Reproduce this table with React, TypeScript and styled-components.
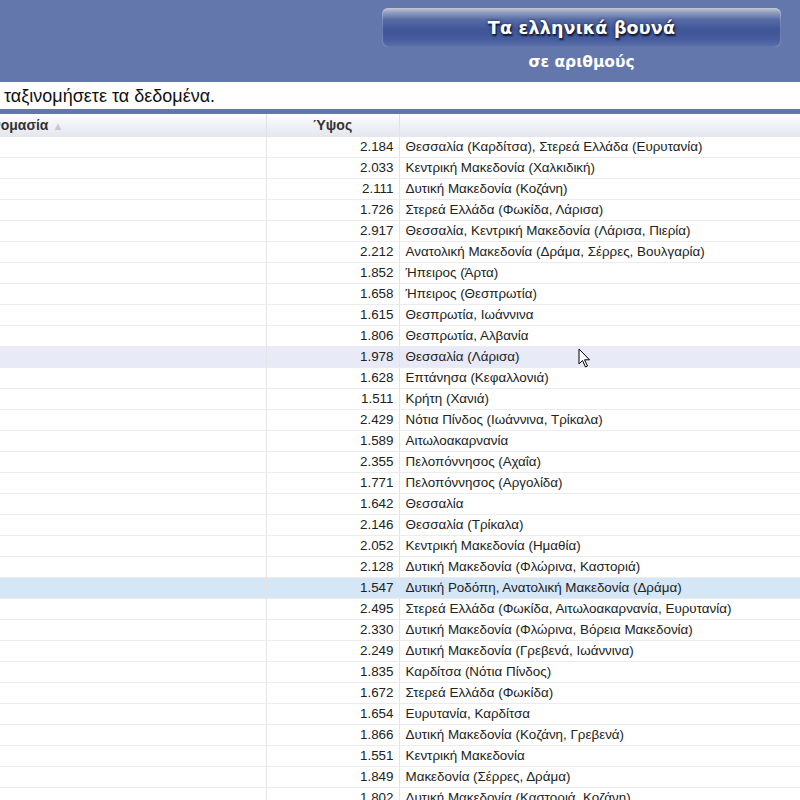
import React from "react";
import styled, { createGlobalStyle } from "styled-components";

const Global = createGlobalStyle`
  html, body { margin: 0; padding: 0; background: #fff; }
  body { font-family: "Liberation Sans", Arial, sans-serif; }
`;

const Page = styled.div`
  width: 800px;
  height: 800px;
  overflow: hidden;
  position: relative;
`;

const Header = styled.header`
  height: 82px;
  background: #6377ad;
  display: flex;
  justify-content: flex-end;
  padding-right: 19px;
  box-sizing: border-box;
`;

const Banner = styled.div`
  width: 399px;
  display: flex;
  flex-direction: column;
  align-items: stretch;
  padding-top: 8px;
`;

const TitleBox = styled.div`
  height: 39px;
  border-radius: 6px;
  background: linear-gradient(
    to bottom,
    #c3c9d3 0%,
    #8e9cbf 12%,
    #566ba6 30%,
    #3f5597 55%,
    #465c9d 80%,
    #5d71aa 100%
  );
  box-shadow: inset 1px 0 1px rgba(255,255,255,0.25), inset -1px 0 1px rgba(255,255,255,0.25);
  display: flex;
  align-items: center;
  justify-content: center;
`;

const Title = styled.h1`
  margin: 0;
  font-family: "DejaVu Sans", Verdana, sans-serif;
  font-weight: bold;
  font-size: 17.5px;
  color: #fff;
  text-shadow: 1px 2px 2px #0c1433, 0 0 3px #1a2550;
  letter-spacing: 0.2px;
`;

const Subtitle = styled.div`
  margin-top: 6px;
  text-align: center;
  font-family: "DejaVu Sans", Verdana, sans-serif;
  font-weight: bold;
  font-size: 15.5px;
  color: #fff;
`;

const Intro = styled.p`
  margin: 0;
  height: 27px;
  line-height: 29px;
  font-size: 18px;
  color: #111;
  padding-left: 4px;
  white-space: nowrap;
`;

const BlueBar = styled.div`
  height: 5px;
  background: #6377ad;
`;

const TableWrap = styled.div`
  margin-left: -23px;
  width: 900px;
`;

const Table = styled.table`
  border-collapse: collapse;
  table-layout: fixed;
  width: 900px;
  font-size: 13.4px;
  color: #222;
`;

const Th = styled.th<{ $align?: string }>`
  height: 22px;
  padding: 0 5px;
  box-sizing: border-box;
  text-align: ${(p) => p.$align || "left"};
  font-weight: bold;
  font-size: 14px;
  color: #333;
  background: linear-gradient(to bottom, #ffffff 0%, #f0f1f6 50%, #e4e7f0 100%);
  border-right: 1px solid #dfe1e8;
  border-bottom: 1px solid #e6e6e6;
  white-space: nowrap;
`;

const SortArrow = styled.span`
  color: #c8c8c8;
  font-size: 11px;
  margin-left: 4px;
`;

const Tr = styled.tr<{ $state?: "hover" | "selected" }>`
  background: ${(p) =>
    p.$state === "hover" ? "#e8eaf7" : p.$state === "selected" ? "#d5e6f7" : "#fff"};
`;

const Td = styled.td<{ $align?: string }>`
  height: 21px;
  padding: 0 5px 0 6px;
  box-sizing: border-box;
  text-align: ${(p) => p.$align || "left"};
  border-right: 1px solid #e4e4e4;
  border-bottom: 1px solid #ececec;
  white-space: nowrap;
  overflow: hidden;
`;

const Cursor = styled.svg`
  position: absolute;
  left: 578px;
  top: 348px;
`;

const rows: [string, string][] = [
  ["2.184", "Θεσσαλία (Καρδίτσα), Στερεά Ελλάδα (Ευρυτανία)"],
  ["2.033", "Κεντρική Μακεδονία (Χαλκιδική)"],
  ["2.111", "Δυτική Μακεδονία (Κοζάνη)"],
  ["1.726", "Στερεά Ελλάδα (Φωκίδα, Λάρισα)"],
  ["2.917", "Θεσσαλία, Κεντρική Μακεδονία (Λάρισα, Πιερία)"],
  ["2.212", "Ανατολική Μακεδονία (Δράμα, Σέρρες, Βουλγαρία)"],
  ["1.852", "Ήπειρος (Άρτα)"],
  ["1.658", "Ήπειρος (Θεσπρωτία)"],
  ["1.615", "Θεσπρωτία, Ιωάννινα"],
  ["1.806", "Θεσπρωτία, Αλβανία"],
  ["1.978", "Θεσσαλία (Λάρισα)"],
  ["1.628", "Επτάνησα (Κεφαλλονιά)"],
  ["1.511", "Κρήτη (Χανιά)"],
  ["2.429", "Νότια Πίνδος (Ιωάννινα, Τρίκαλα)"],
  ["1.589", "Αιτωλοακαρνανία"],
  ["2.355", "Πελοπόννησος (Αχαΐα)"],
  ["1.771", "Πελοπόννησος (Αργολίδα)"],
  ["1.642", "Θεσσαλία"],
  ["2.146", "Θεσσαλία (Τρίκαλα)"],
  ["2.052", "Κεντρική Μακεδονία (Ημαθία)"],
  ["2.128", "Δυτική Μακεδονία (Φλώρινα, Καστοριά)"],
  ["1.547", "Δυτική Ροδόπη, Ανατολική Μακεδονία (Δράμα)"],
  ["2.495", "Στερεά Ελλάδα (Φωκίδα, Αιτωλοακαρνανία, Ευρυτανία)"],
  ["2.330", "Δυτική Μακεδονία (Φλώρινα, Βόρεια Μακεδονία)"],
  ["2.249", "Δυτική Μακεδονία (Γρεβενά, Ιωάννινα)"],
  ["1.835", "Καρδίτσα (Νότια Πίνδος)"],
  ["1.672", "Στερεά Ελλάδα (Φωκίδα)"],
  ["1.654", "Ευρυτανία, Καρδίτσα"],
  ["1.866", "Δυτική Μακεδονία (Κοζάνη, Γρεβενά)"],
  ["1.551", "Κεντρική Μακεδονία"],
  ["1.849", "Μακεδονία (Σέρρες, Δράμα)"],
  ["1.802", "Δυτική Μακεδονία (Καστοριά, Κοζάνη)"],
];

export default function App() {
  return (
    <Page>
      <Global />
      <Header>
        <Banner>
          <TitleBox>
            <Title>Τα ελληνικά βουνά</Title>
          </TitleBox>
          <Subtitle>σε αριθμούς</Subtitle>
        </Banner>
      </Header>
      <Intro> ταξινομήσετε τα δεδομένα.</Intro>
      <BlueBar />
      <TableWrap>
        <Table>
          <colgroup>
            <col style={{ width: 289 }} />
            <col style={{ width: 133 }} />
            <col />
          </colgroup>
          <thead>
            <tr>
              <Th>
                Ονομασία<SortArrow>▲</SortArrow>
              </Th>
              <Th $align="center">Ύψος</Th>
              <Th />
            </tr>
          </thead>
          <tbody>
            {rows.map(([h, r], i) => (
              <Tr key={i} $state={i === 10 ? "hover" : i === 21 ? "selected" : undefined}>
                <Td />
                <Td $align="right">{h}</Td>
                <Td>{r}</Td>
              </Tr>
            ))}
          </tbody>
        </Table>
      </TableWrap>
      <Cursor width="13" height="20" viewBox="0 0 13 20">
        <path d="M1 1 L1 16 L4.5 12.5 L7.5 19 L9.5 18 L6.5 11.8 L11.5 11.8 Z" fill="#fff" stroke="#000" strokeWidth="1" strokeLinejoin="round" />
      </Cursor>
    </Page>
  );
}
